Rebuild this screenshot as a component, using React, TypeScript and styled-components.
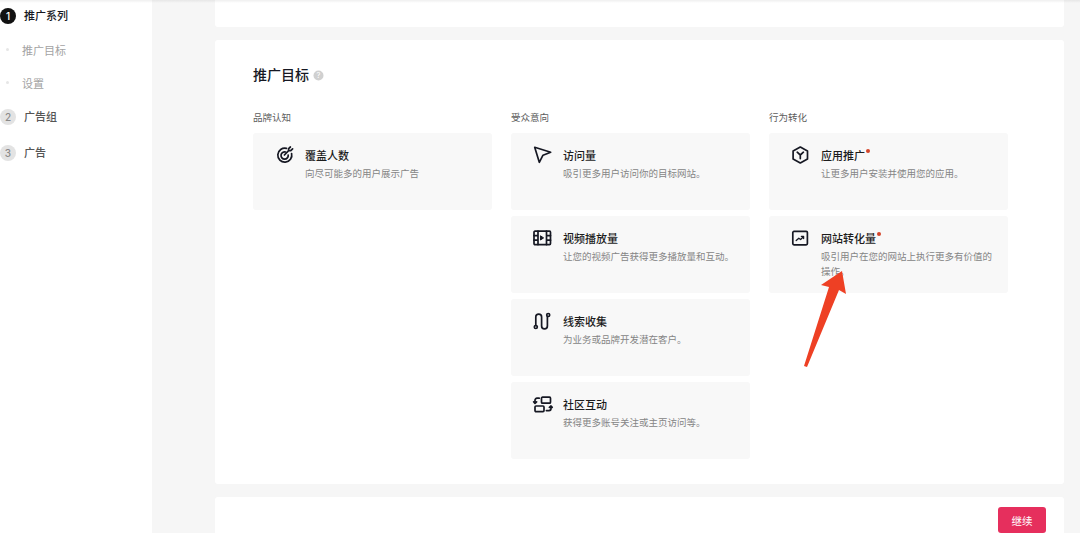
import React from "react";
import styled, { createGlobalStyle } from "styled-components";

const Global = createGlobalStyle`
  html, body { margin: 0; padding: 0; height: 100%; overflow: hidden; background: #f6f6f6; }
  body { font-family: "Inter", "Noto Sans CJK SC", sans-serif; }
  * { box-sizing: border-box; }
`;

const Page = styled.div`
  position: relative;
  display: flex;
  width: 1080px;
  height: 533px;
  overflow: hidden;
  background: #f6f6f6;
`;
const TopShade = styled.div`
  position: absolute;
  top: 0; left: 0; right: 0;
  height: 3px;
  background: linear-gradient(#00000010, #00000000);
`;
const Sidebar = styled.aside`
  width: 152px;
  flex: none;
  background: #fff;
  display: flex;
  flex-direction: column;
  padding-top: 7px;
`;
const StepRow = styled.div<{ $h: number }>`
  display: flex;
  align-items: center;
  gap: 8px;
  height: ${p => p.$h}px;
`;
const StepBadge = styled.span<{ $active?: boolean }>`
  width: 16px;
  height: 16px;
  border-radius: 50%;
  display: flex;
  align-items: center;
  justify-content: center;
  font-size: 10px;
  font-weight: 500;
  font-family: "Inter", sans-serif;
  background: ${p => (p.$active ? "#111" : "#e3e3e3")};
  color: ${p => (p.$active ? "#fff" : "#8a8a8a")};
`;
const StepLabel = styled.span<{ $active?: boolean }>`
  font-size: 11px;
  line-height: 16px;
  font-weight: 500;
  color: ${p => (p.$active ? "#161823" : "#555")};
`;
const SubRow = styled.div`
  display: flex;
  align-items: center;
  height: 33px;
  padding-left: 6px;
  gap: 14px;
`;
const SubDot = styled.i`
  width: 3px;
  height: 3px;
  margin-right: -1px;
  border-radius: 50%;
  background: #e6e6e6;
`;
const SubLabel = styled.span`
  font-size: 11px;
  color: #a3a3a3;
`;
const Main = styled.main`
  width: 849px;
  margin-left: 63px;
  display: flex;
  flex-direction: column;
  gap: 13px;
  flex: none;
`;
const TopCard = styled.div`
  height: 27px;
  flex: none;
  background: #fff;
  border-radius: 0 0 3px 3px;
`;
const Panel = styled.section`
  height: 444px;
  flex: none;
  background: #fff;
  border-radius: 3px;
  padding: 24px 38px 0;
`;
const TitleRow = styled.div`
  display: flex;
  align-items: center;
  gap: 4px;
  height: 20px;
  margin-bottom: 27px;
`;
const Title = styled.h2`
  margin: 0;
  font-size: 14px;
  font-weight: 500;
  color: #161823;
`;
const HelpIcon = styled.svg`
  margin-top: 3px;
`;
const Columns = styled.div`
  display: grid;
  grid-template-columns: repeat(3, 239px);
  column-gap: 19px;
`;
const Column = styled.div`
  display: flex;
  flex-direction: column;
  gap: 6.5px;
`;
const ColumnLabel = styled.div`
  font-size: 9.5px;
  line-height: 14px;
  height: 15.5px;
  color: #5c5c5c;
`;
const Card = styled.div`
  display: flex;
  height: 76.5px;
  background: #f8f8f8;
  border-radius: 3px;
  padding: 13px 14px 0 23px;
  gap: 11px;
`;
const IconBox = styled.div`
  width: 18px;
  height: 18px;
  flex: none;
  svg { display: block; overflow: visible; }
`;
const CardText = styled.div`
  min-width: 0;
  margin-top: -2px;
`;
const CardTitle = styled.div`
  position: relative;
  display: inline-block;
  font-size: 11px;
  line-height: 17px;
  font-weight: 500;
  color: #1c1c1c;
`;
const RedDot = styled.i`
  position: absolute;
  top: 1px;
  right: -5px;
  width: 4px;
  height: 4px;
  border-radius: 50%;
  background: #d4452a;
`;
const CardDesc = styled.div`
  margin-top: 1px;
  font-size: 9.5px;
  line-height: 15px;
  color: #858585;
`;
const Footer = styled.div`
  height: 60px;
  flex: none;
  background: #fff;
  border-radius: 3px 3px 0 0;
  display: flex;
  justify-content: flex-end;
  padding: 10px 18px 0 0;
`;
const Continue = styled.button`
  width: 48px;
  height: 26px;
  border: 0;
  border-radius: 3px;
  background: #e62f5d;
  color: #fff;
  font-size: 10.5px;
  font-family: inherit;
  padding: 0;
`;
const Arrow = styled.svg`
  position: absolute;
  left: 800px;
  top: 265px;
`;

const S = { fill: "none", stroke: "#161823", strokeWidth: 1.7, strokeLinecap: "round", strokeLinejoin: "round" } as const;

const Reach = () => (
  <svg width="18" height="18" viewBox="0 0 18 18" {...S}>
    <path d="M10.5 2.4A7 7 0 1 0 15.6 7.5" />
    <path d="M9.6 6A3.6 3.6 0 1 0 12.2 9" />
    <path d="M8.4 9 12.6 4.6M12.6 4.6V2.6L14.4 1M12.6 4.6h2.2L16.6 2.8" />
  </svg>
);
const Cursor = () => (
  <svg width="18" height="18" viewBox="0 0 18 18" {...S}>
    <path d="M.7 1.3 16.7 6.3 9 9.2 5.3 16.3z" />
  </svg>
);
const Film = () => (
  <svg width="18" height="18" viewBox="0 0 18 18" {...S}>
    <rect x="0" y="2.2" width="16.5" height="13.4" rx="1" />
    <path d="M4 2.2v13.4M12.5 2.2v13.4M0 6.6h4M0 11.2h4M12.5 6.6h4M12.5 11.2h4" />
    <path d="M6.8 7 9.6 8.9 6.8 10.8z" fill="#161823" strokeWidth="1" />
  </svg>
);
const Leads = () => (
  <svg width="18" height="18" viewBox="0 0 18 18" {...S}>
    <circle cx="1.8" cy="15" r="1.5" />
    <circle cx="14.2" cy="3" r="1.5" />
    <path d="M1.8 13.5V5a2.9 2.9 0 0 1 5.8 0v9a2.9 2.9 0 0 0 5.8 0V4.5" />
  </svg>
);
const Community = () => (
  <svg width="18" height="18" viewBox="0 0 18 18" {...S}>
    <rect x="7.5" y="2.2" width="9" height="6" rx="1" />
    <rect x="1" y="11" width="9" height="5.6" rx="1" />
    <path d="M5.2 3.2H3a2 2 0 0 0-2 2v3M-.4 6.8 1 8.4l1.6-1.6" />
    <path d="M12.4 15.6h2.6a2 2 0 0 0 2-2v-2.6M15.4 12.4 17 11l1.2 1.4" />
  </svg>
);
const Cube = () => (
  <svg width="18" height="18" viewBox="0 0 18 18" {...S}>
    <path d="M8.3 1 15.5 5v8l-7.2 4-7.2-4V5z" />
    <path d="M5.2 6.2 8.3 9l3.1-2.8M8.3 9v3.6" />
  </svg>
);
const Trend = () => (
  <svg width="18" height="18" viewBox="0 0 18 18" {...S}>
    <rect x="0.8" y="2.4" width="14.6" height="13.4" rx="1.2" />
    <path d="M4.2 11.5 6.8 9.2l1.8 1.3 2.8-2.8M9.4 7.4h2.2v2.2" strokeWidth="1.3" />
  </svg>
);

type Item = { icon: React.ReactNode; title: string; desc: string; dot?: boolean };

const columns: { label: string; items: Item[] }[] = [
  { label: "品牌认知", items: [{ icon: <Reach />, title: "覆盖人数", desc: "向尽可能多的用户展示广告" }] },
  {
    label: "受众意向",
    items: [
      { icon: <Cursor />, title: "访问量", desc: "吸引更多用户访问你的目标网站。" },
      { icon: <Film />, title: "视频播放量", desc: "让您的视频广告获得更多播放量和互动。" },
      { icon: <Leads />, title: "线索收集", desc: "为业务或品牌开发潜在客户。" },
      { icon: <Community />, title: "社区互动", desc: "获得更多账号关注或主页访问等。" },
    ],
  },
  {
    label: "行为转化",
    items: [
      { icon: <Cube />, title: "应用推广", desc: "让更多用户安装并使用您的应用。", dot: true },
      { icon: <Trend />, title: "网站转化量", desc: "吸引用户在您的网站上执行更多有价值的操作。", dot: true },
    ],
  },
];

export default function App() {
  return (
    <Page>
      <Global />
      <Sidebar>
        <StepRow $h={18}>
          <StepBadge $active>1</StepBadge>
          <StepLabel $active>推广系列</StepLabel>
        </StepRow>
        <SubRow style={{ marginTop: 8 }}>
          <SubDot />
          <SubLabel>推广目标</SubLabel>
        </SubRow>
        <SubRow>
          <SubDot />
          <SubLabel>设置</SubLabel>
        </SubRow>
        <StepRow $h={36}>
          <StepBadge>2</StepBadge>
          <StepLabel>广告组</StepLabel>
        </StepRow>
        <StepRow $h={35}>
          <StepBadge>3</StepBadge>
          <StepLabel>广告</StepLabel>
        </StepRow>
      </Sidebar>
      <Main>
        <TopCard />
        <Panel>
          <TitleRow>
            <Title>推广目标</Title>
            <HelpIcon width="11" height="11" viewBox="0 0 11 11">
              <circle cx="5.5" cy="5.5" r="5" fill="#d0d0d0" />
              <text x="5.5" y="8.2" textAnchor="middle" fontSize="7.5" fill="#fff" fontFamily="Inter, sans-serif">?</text>
            </HelpIcon>
          </TitleRow>
          <Columns>
            {columns.map(col => (
              <Column key={col.label}>
                <ColumnLabel>{col.label}</ColumnLabel>
                {col.items.map(it => (
                  <Card key={it.title}>
                    <IconBox>{it.icon}</IconBox>
                    <CardText>
                      <CardTitle>
                        {it.title}
                        {it.dot && <RedDot />}
                      </CardTitle>
                      <CardDesc>{it.desc}</CardDesc>
                    </CardText>
                  </Card>
                ))}
              </Column>
            ))}
          </Columns>
        </Panel>
        <Footer>
          <Continue>继续</Continue>
        </Footer>
      </Main>
      <TopShade />
      <Arrow width="50" height="105" viewBox="800 265 50 105">
        <path d="M842 271 846 294 839 290 807 367 804 366 829 287 821 285z" fill="#ee4024" />
      </Arrow>
    </Page>
  );
}
